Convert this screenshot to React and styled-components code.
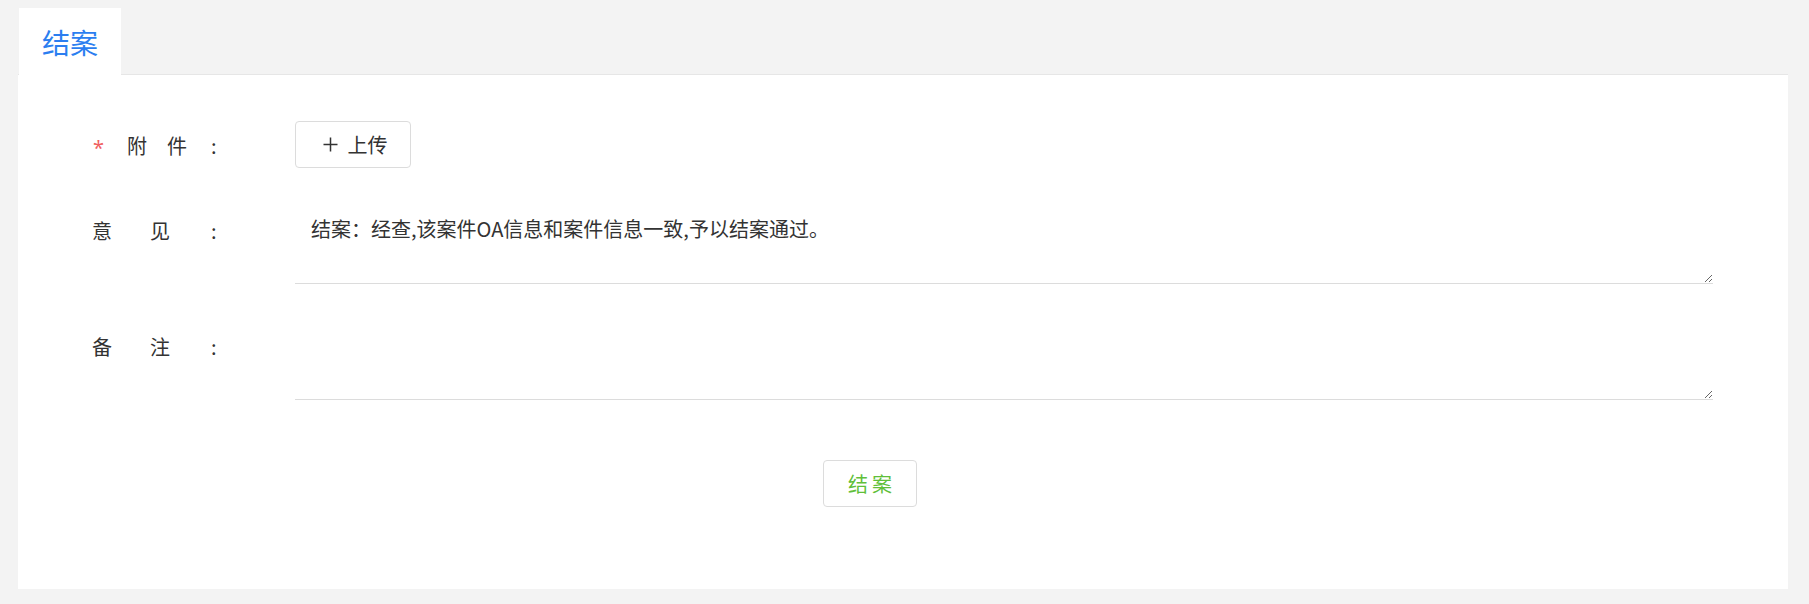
import React from "react";
import styled, { createGlobalStyle } from "styled-components";

const GlobalStyle = createGlobalStyle`
    body {
        margin: 0;
        background: #f3f3f3;
        font-family: "Noto Sans CJK SC", "Noto Sans", sans-serif;
        color: #333;
    }
`;

const Page = styled.div`
    padding: 8px 21px 16px 18px;
`;

const TabBar = styled.div`
    display: flex;
    height: 66px;
    border-bottom: 1px solid #e6e6e6;
`;

const Tab = styled.div`
    width: 102px;
    height: 67px;
    margin-left: 1px;
    background: #fff;
    color: ${(props) => (props.$active ? "#2b7ef0" : "#333")};
    font-size: 28px;
    display: flex;
    align-items: center;
    justify-content: center;
`;

const Panel = styled.div`
    background: #fff;
    padding: 46px 75px 82px 74px;
    display: flex;
    flex-direction: column;
    gap: 34px;
`;

const FormRow = styled.div`
    display: grid;
    grid-template-columns: 203px 1fr;
    align-items: start;
`;

const Label = styled.div`
    display: flex;
    align-items: center;
    font-size: 20px;
    line-height: 30px;
    padding-top: ${(props) => props.$top}px;
`;

const Glyph = styled.span`
    display: inline-block;
    width: ${(props) => props.$w}px;
    margin-left: ${(props) => props.$indent || 0}px;
`;

const Required = styled(Glyph)`
    color: #f06060;
    font-family: "Noto Sans", sans-serif;
    font-size: 20px;
    line-height: 20px;
    padding-top: 4px;
`;

const UploadButton = styled.button`
    width: 116px;
    height: 47px;
    display: flex;
    align-items: center;
    justify-content: center;
    gap: 10px;
    background: #fff;
    border: 1px solid #dcdcdc;
    border-radius: 4px;
    font-family: inherit;
    font-size: 20px;
    color: #333;
    padding: 0 0 0 4px;
`;

const TextArea = styled.textarea`
    display: block;
    box-sizing: border-box;
    width: 100%;
    height: 82px;
    border: none;
    border-bottom: 1px solid #dcdcdc;
    padding: 12px 16px;
    font-family: inherit;
    font-size: 20px;
    line-height: 30px;
    color: #333;
    resize: vertical;
    outline: none;
`;

const ButtonRow = styled.div`
    display: flex;
    padding-left: 731px;
    margin-top: 26px;
`;

const SubmitButton = styled.button`
    width: 94px;
    height: 47px;
    background: #fff;
    border: 1px solid #dcdcdc;
    border-radius: 4px;
    font-family: inherit;
    font-size: 20px;
    color: #5fbf3a;
    letter-spacing: 4px;
    padding: 0 0 0 4px;
`;

const PlusIcon = () => (
    <svg width="15" height="15" viewBox="0 0 15 15">
        <path d="M7.5 0.5v14M0.5 7.5h14" stroke="#333" strokeWidth="1.5" />
    </svg>
);

export default function App() {
    return (
        <Page>
            <GlobalStyle />
            <TabBar>
                <Tab $active>结案</Tab>
            </TabBar>
            <Panel>
                <FormRow>
                    <Label $top={10}>
                        <Required $w={34} $indent={1}>*</Required>
                        <Glyph $w={40}>附</Glyph>
                        <Glyph $w={44}>件</Glyph>
                        <Glyph>:</Glyph>
                    </Label>
                    <div>
                        <UploadButton>
                            <PlusIcon />
                            上传
                        </UploadButton>
                    </div>
                </FormRow>
                <FormRow>
                    <Label $top={14}>
                        <Glyph $w={58}>意</Glyph>
                        <Glyph $w={61}>见</Glyph>
                        <Glyph>:</Glyph>
                    </Label>
                    <TextArea defaultValue="结案：经查,该案件OA信息和案件信息一致,予以结案通过。" />
                </FormRow>
                <FormRow>
                    <Label $top={14}>
                        <Glyph $w={58}>备</Glyph>
                        <Glyph $w={61}>注</Glyph>
                        <Glyph>:</Glyph>
                    </Label>
                    <TextArea />
                </FormRow>
                <ButtonRow>
                    <SubmitButton>结案</SubmitButton>
                </ButtonRow>
            </Panel>
        </Page>
    );
}
